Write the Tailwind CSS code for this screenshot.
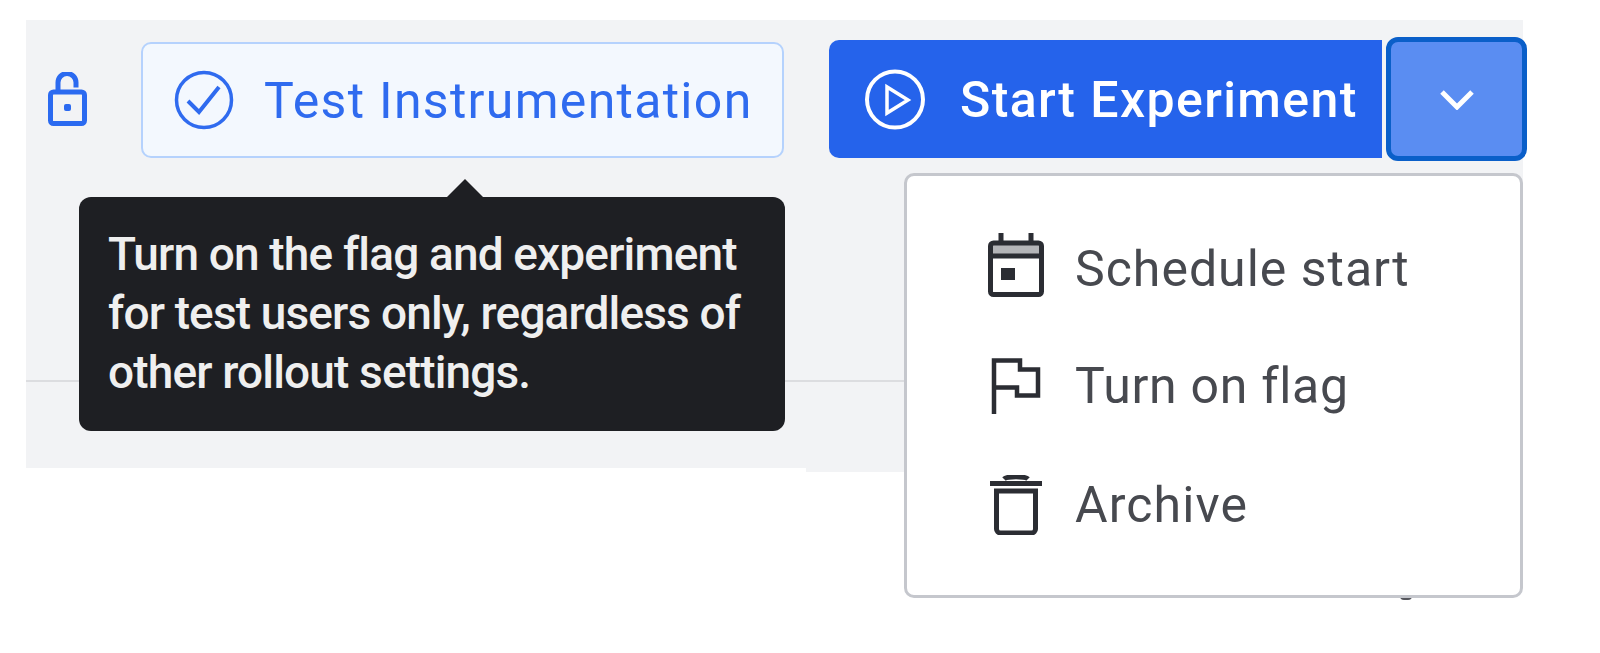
<!doctype html>
<html>
<head>
<meta charset="utf-8">
<script src="https://cdn.jsdelivr.net/npm/@tailwindcss/browser@4"></script>
</head>
<body class="bg-white overflow-hidden font-['Roboto',sans-serif]">
<div class="w-[1600px] h-[653px] pt-[20px] pl-[26px] blur-[0.6px]">
  <div class="relative w-[1497px] h-[448px] bg-[#f2f3f5]">
    <div class="absolute left-[780px] right-0 -bottom-[4px] h-[4px] bg-[#f2f3f5]"></div>
    <div class="h-[362px] border-b-2 border-[#dcdde0] pt-[17px] pl-[22px] flex items-start">
      <div class="h-[124px] flex items-center w-[39px] shrink-0">
        <svg class="w-[39px] h-[54px] text-[#2b6af0]" viewBox="0 0 39 54" fill="none" stroke="currentColor" stroke-width="5"><rect x="2.500" y="20" width="34" height="31.500" rx="3"/><path d="M10 20V10.500a9 9 0 0 1 18 0v5"/><rect x="16" y="32" width="7" height="7" rx="2" fill="currentColor" stroke="none"/></svg>
      </div>
      <button class="ml-[54px] mt-[5px] w-[643px] h-[116px] shrink-0 rounded-[10px] border-2 border-[#b5d2fd] bg-[#f3f8fe] flex items-center pl-[31px] text-[#2f6bef]">
        <svg class="w-[60px] h-[60px] shrink-0" viewBox="0 0 60 60" fill="none" stroke="currentColor"><circle cx="30" cy="30" r="27.500" stroke-width="3.500"/><path d="M14 31l11 11 20-25" stroke-width="4"/></svg>
        <span class="ml-[30px] translate-y-[1px] text-[50px] leading-none font-normal tracking-[1.3px] whitespace-nowrap">Test Instrumentation</span>
      </button>
      <button class="ml-[45px] mt-[3px] w-[553px] h-[118px] shrink-0 rounded-l-[10px] bg-[#2563eb] flex items-center pl-[36px] text-white">
        <svg class="w-[60px] h-[61px] shrink-0" viewBox="0 0 60 61" fill="none" stroke="currentColor" stroke-width="4"><circle cx="30" cy="30.500" r="28"/><path d="M22 18v26l21-13z" stroke-width="3.500"/></svg>
        <span class="ml-[35px] translate-y-[1px] text-[50px] leading-none font-medium tracking-[1.4px] whitespace-nowrap">Start Experiment</span>
      </button>
      <button class="ml-[4px] w-[141px] h-[124px] shrink-0 rounded-[12px] border-[5px] border-[#0a5fc9] bg-[#5a8df2] flex items-center justify-center text-white">
        <svg class="w-[36px] h-[22px]" viewBox="0 0 36 22" fill="none" stroke="currentColor" stroke-width="5"><path d="M3 4l15 15L33 4"/></svg>
      </button>
    </div>

    <div class="absolute top-[159px] w-0 h-0 left-[421px] border-l-[18px] border-r-[18px] border-b-[18px] border-l-transparent border-r-transparent border-b-[#1e1f23]"></div>
    <div class="absolute left-[53px] top-[177px] w-[706px] h-[234px] rounded-[12px] bg-[#1e1f23] pl-[29px] pt-[28px] text-[46px] leading-[59px] text-[#efefef] font-medium tracking-[-0.85px] whitespace-nowrap">
      <p>Turn on the flag and experiment</p>
      <p>for test users only, regardless of</p>
      <p>other rollout settings.</p>
    </div>

    <div class="absolute left-[1374px] top-[576px] w-[12px] h-[4px] rounded-b-full bg-[#55565c]"></div>
    <div class="absolute left-[878px] top-[153px] w-[619px] h-[425px] rounded-[10px] border-[3px] border-[#c5c7cd] bg-white pt-[31px] pl-[81px] text-[#47494f]">
      <div class="h-[119px] flex items-center">
        <div class="w-[56px] flex justify-center shrink-0 -translate-y-[2px]">
          <svg class="w-[56px] h-[64px]" viewBox="0 0 56 64" fill="none" stroke="#2b2d33" stroke-width="5"><rect x="2" y="10" width="52" height="12" fill="#b4b5b8" stroke="none"/><rect x="2.500" y="10" width="51" height="51.500" rx="3"/><path d="M2 23h52M13 0v10M43 0v10"/><rect x="13" y="35" width="14" height="12" fill="#2b2d33" stroke="none"/></svg>
        </div>
        <span class="ml-[31px] translate-y-[2px] text-[50px] leading-none font-normal tracking-[1px] whitespace-nowrap">Schedule start</span>
      </div>
      <div class="h-[119px] flex items-center">
        <div class="w-[56px] flex justify-center shrink-0">
          <svg class="w-[50px] h-[56px]" viewBox="0 0 50 56" fill="none" stroke="#2b2d33" stroke-width="4.500"><path d="M3 56V2.500h26v9h18v26H26v-8H3"/></svg>
        </div>
        <span class="ml-[31px] text-[50px] leading-none font-normal tracking-[0.7px] whitespace-nowrap">Turn on flag</span>
      </div>
      <div class="h-[119px] flex items-center">
        <div class="w-[56px] flex justify-center shrink-0">
          <svg class="w-[52px] h-[60px]" viewBox="0 0 52 60" fill="none" stroke="#2b2d33"><path d="M0 8.500h52" stroke-width="5"/><path d="M14 4c3-3 21-3 24 0" stroke-width="5"/><path d="M6.500 16h39v38a4 4 0 0 1-4 4h-31a4 4 0 0 1-4-4z" stroke-width="5"/></svg>
        </div>
        <span class="ml-[31px] text-[50px] leading-none font-normal tracking-[1.1px] whitespace-nowrap">Archive</span>
      </div>
    </div>
  </div>
</div>
</body>
</html>
